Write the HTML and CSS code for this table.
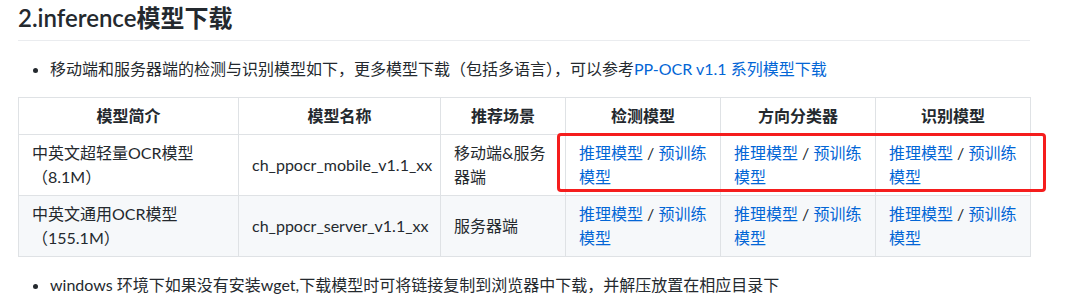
FILE: index.html
```html
<!DOCTYPE html>
<html lang="zh-CN">
<head>
<meta charset="utf-8">
<title>inference模型下载</title>
<link rel="stylesheet" href="styles.css">
</head>
<body>
<div class="doc">
  <h2 class="title">2.inference模型下载</h2>
  <ul class="list">
    <li>移动端和服务器端的检测与识别模型如下，更多模型下载（包括多语言），可以参考<a class="link" href="#">PP-OCR v1.1 系列模型下载</a></li>
  </ul>
  <div class="table-wrap">
    <table class="models">
      <colgroup>
        <col class="c1"><col class="c2"><col class="c3"><col class="c4"><col class="c5"><col class="c6">
      </colgroup>
      <thead>
        <tr>
          <th>模型简介</th>
          <th>模型名称</th>
          <th>推荐场景</th>
          <th>检测模型</th>
          <th>方向分类器</th>
          <th>识别模型</th>
        </tr>
      </thead>
      <tbody>
        <tr>
          <td>中英文超轻量OCR模型（8.1M）</td>
          <td>ch_ppocr_mobile_v1.1_xx</td>
          <td>移动端&amp;服务器端</td>
          <td><a class="link" href="#">推理模型</a> / <a class="link" href="#">预训练模型</a></td>
          <td><a class="link" href="#">推理模型</a> / <a class="link" href="#">预训练模型</a></td>
          <td><a class="link" href="#">推理模型</a> / <a class="link" href="#">预训练模型</a></td>
        </tr>
        <tr class="alt">
          <td>中英文通用OCR模型（155.1M）</td>
          <td>ch_ppocr_server_v1.1_xx</td>
          <td>服务器端</td>
          <td><a class="link" href="#">推理模型</a> / <a class="link" href="#">预训练模型</a></td>
          <td><a class="link" href="#">推理模型</a> / <a class="link" href="#">预训练模型</a></td>
          <td><a class="link" href="#">推理模型</a> / <a class="link" href="#">预训练模型</a></td>
        </tr>
      </tbody>
    </table>
    <div class="highlight"></div>
  </div>
  <ul class="list">
    <li>windows 环境下如果没有安装wget,下载模型时可将链接复制到浏览器中下载，并解压放置在相应目录下</li>
  </ul>
</div>
</body>
</html>
```

FILE: styles.css
```css
html, body {
  margin: 0;
  padding: 0;
  background: #ffffff;
}

body {
  font-family: Lato, "Noto Sans CJK SC", sans-serif;
  font-size: 16px;
  line-height: 24px;
  color: #24292e;
}

.doc {
  padding: 3px 0 0 18px;
  width: 1012px;
}

.title {
  margin: 0;
  padding: 0 0 7px 0;
  font-size: 24px;
  line-height: 30px;
  font-weight: 600;
  border-bottom: 1px solid #eaecef;
}

.list {
  margin: 16px 0;
  padding-left: 32px;
}

.link {
  color: #0366d6;
  text-decoration: none;
}

.table-wrap {
  position: relative;
}

.models {
  border-collapse: collapse;
  table-layout: fixed;
  width: 1012px;
}

.c1 { width: 220px; }
.c2 { width: 202px; }
.c3 { width: 125px; }
.c4 { width: 155px; }
.c5 { width: 155px; }
.c6 { width: 155px; }

.models th,
.models td {
  border: 1px solid #dfe2e5;
  padding: 6px 13px;
}

.models th {
  font-weight: 600;
  text-align: center;
  background: #ffffff;
}

.models td {
  text-align: left;
  vertical-align: middle;
}

.models tr.alt {
  background: #f6f8fa;
}

.highlight {
  position: absolute;
  left: 539px;
  top: 36px;
  width: 483px;
  height: 53px;
  border: 3px solid #f51d1d;
  border-radius: 4px;
  pointer-events: none;
}
```
